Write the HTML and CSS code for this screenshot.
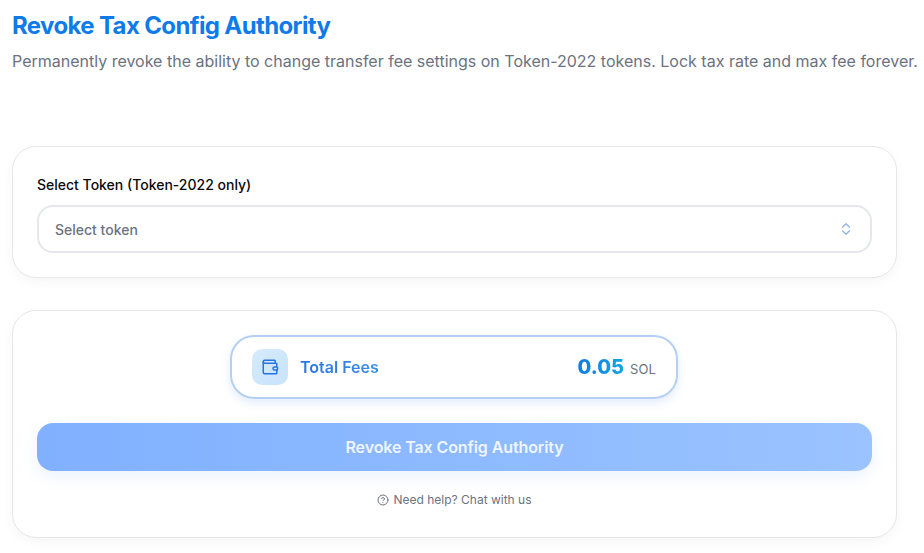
FILE: index.html
```html
<!doctype html>
<html>
  <head>
    <meta http-equiv="content-type" content="text/html; charset=UTF-8">
    <meta name="viewport" content="width=device-width, initial-scale=1">
    <title>Revoke Tax Config Authority</title>
    <link rel="stylesheet" href="styles.css">
  </head>

  <body>
    <div class="page">
      <div class="header">
        <h1 class="title">Revoke Tax Config Authority</h1>
        <p class="subtitle">Permanently revoke the ability to change transfer fee settings on Token-2022 tokens. Lock tax rate and max fee forever.</p>
      </div>

      <div class="card tokenCard">
        <label class="label">Select Token (Token-2022 only)</label>
        <div class="select">
          <span>Select token</span>
          <svg class="chevrons" viewBox="0 0 24 24" fill="none" stroke="currentColor" stroke-width="2" stroke-linecap="round" stroke-linejoin="round">
            <path d="m7 15 5 5 5-5"></path>
            <path d="m7 9 5-5 5 5"></path>
          </svg>
        </div>
      </div>

      <div class="card submitCard">
        <div class="fees">
          <div class="feesLeft">
            <div class="walletBox">
              <svg class="wallet" viewBox="0 0 24 24" fill="none" stroke="currentColor" stroke-width="2" stroke-linecap="round" stroke-linejoin="round">
                <path d="M19 7V4a1 1 0 0 0-1-1H5a2 2 0 0 0 0 4h15a1 1 0 0 1 1 1v4h-3a2 2 0 0 0 0 4h3a1 1 0 0 0 1-1v-2a1 1 0 0 0-1-1"></path>
                <path d="M3 5v14a2 2 0 0 0 2 2h15a1 1 0 0 0 1-1v-4"></path>
              </svg>
            </div>
            <span class="feesLabel">Total Fees</span>
          </div>
          <div class="feesAmount">
            <span class="amount">0.05</span>
            <span class="unit">SOL</span>
          </div>
        </div>

        <button class="submit">Revoke Tax Config Authority</button>

        <div class="help">
          <svg class="helpIcon" viewBox="0 0 24 24" fill="none" stroke="currentColor" stroke-width="2" stroke-linecap="round" stroke-linejoin="round">
            <circle cx="12" cy="12" r="10"></circle>
            <path d="M9.09 9a3 3 0 0 1 5.83 1c0 2-3 3-3 3"></path>
            <path d="M12 17h.01"></path>
          </svg>
          <span>Need help? Chat with us</span>
        </div>
      </div>
    </div>
  </body>
</html>
```

FILE: styles.css
```css
* {
  box-sizing: border-box;
}

html, body {
  height: 553px;
  overflow: hidden;
}

body {
  margin: 0;
  background-color: white;
  font-family: "Inter", "Liberation Sans", sans-serif;
}

.page {
  width: 924px;
  padding: 12px 27px 0 12px;
}

.header {
  height: 134px;
  white-space: nowrap;
}

.title {
  margin: 0;
  font-size: 24px;
  line-height: 28px;
  font-weight: 700;
  letter-spacing: -0.63px;
  color: #0f7be8;
}

.subtitle {
  margin: 9px 0 0;
  font-size: 16px;
  line-height: 24px;
  color: #6b7280;
}

.card {
  background-color: white;
  border: 1px solid #e5e7eb;
  border-radius: 24px;
  padding: 24px;
  box-shadow: 0 4px 12px rgba(0, 0, 0, 0.04);
}

.tokenCard {
  height: 132px;
  padding-top: 28px;
  margin-bottom: 32px;
}

.label {
  display: block;
  font-size: 14px;
  line-height: 20px;
  font-weight: 500;
  color: #0a0a0a;
  margin-bottom: 10px;
}

.select {
  display: flex;
  align-items: center;
  justify-content: space-between;
  height: 48px;
  padding: 0 16px;
  border: 2px solid #e5e7eb;
  border-radius: 16px;
  font-size: 14px;
  font-weight: 500;
  color: #6b7280;
}

.chevrons {
  width: 16px;
  height: 16px;
  color: #8fb4ea;
}

.submitCard {
  height: 228px;
  display: flex;
  flex-direction: column;
  align-items: center;
}

.fees {
  display: flex;
  align-items: center;
  justify-content: space-between;
  width: 448px;
  height: 64px;
  margin-right: 1px;
  padding: 0 20px;
  border: 2px solid #b5cff2;
  border-radius: 24px;
  box-shadow: 0 4px 10px rgba(59, 130, 246, 0.14);
}

.feesLeft {
  display: flex;
  align-items: center;
  gap: 12px;
}

.walletBox {
  display: flex;
  align-items: center;
  justify-content: center;
  width: 36px;
  height: 36px;
  border-radius: 10px;
  background: linear-gradient(135deg, #d6ebfc, #c8e3fb);
}

.wallet {
  width: 18px;
  height: 18px;
  color: #2673e3;
}

.feesLabel {
  font-size: 16px;
  font-weight: 600;
  background: linear-gradient(90deg, #2673e3, #3d8ee6);
  -webkit-background-clip: text;
  background-clip: text;
  color: transparent;
}

.feesAmount {
  display: flex;
  align-items: baseline;
  gap: 6px;
}

.amount {
  font-size: 20px;
  font-weight: 800;
  background: linear-gradient(90deg, #0f7be8, #12a5e0);
  -webkit-background-clip: text;
  background-clip: text;
  color: transparent;
}

.unit {
  font-size: 13px;
  letter-spacing: 0.1px;
  color: #6b7280;
}

.submit {
  width: 100%;
  height: 48px;
  margin-top: 24px;
  border: none;
  border-radius: 16px;
  background: linear-gradient(90deg, #80b0ff, #9ac3ff);
  box-shadow: 0 6px 16px rgba(59, 130, 246, 0.1);
  font-family: inherit;
  font-size: 16px;
  font-weight: 600;
  letter-spacing: -0.1px;
  color: #eef5ff;
}

.help {
  display: flex;
  align-items: center;
  gap: 4px;
  margin-top: 20px;
  font-size: 12px;
  line-height: 18px;
  color: #6b7280;
}

.helpIcon {
  width: 12px;
  height: 12px;
}
```
